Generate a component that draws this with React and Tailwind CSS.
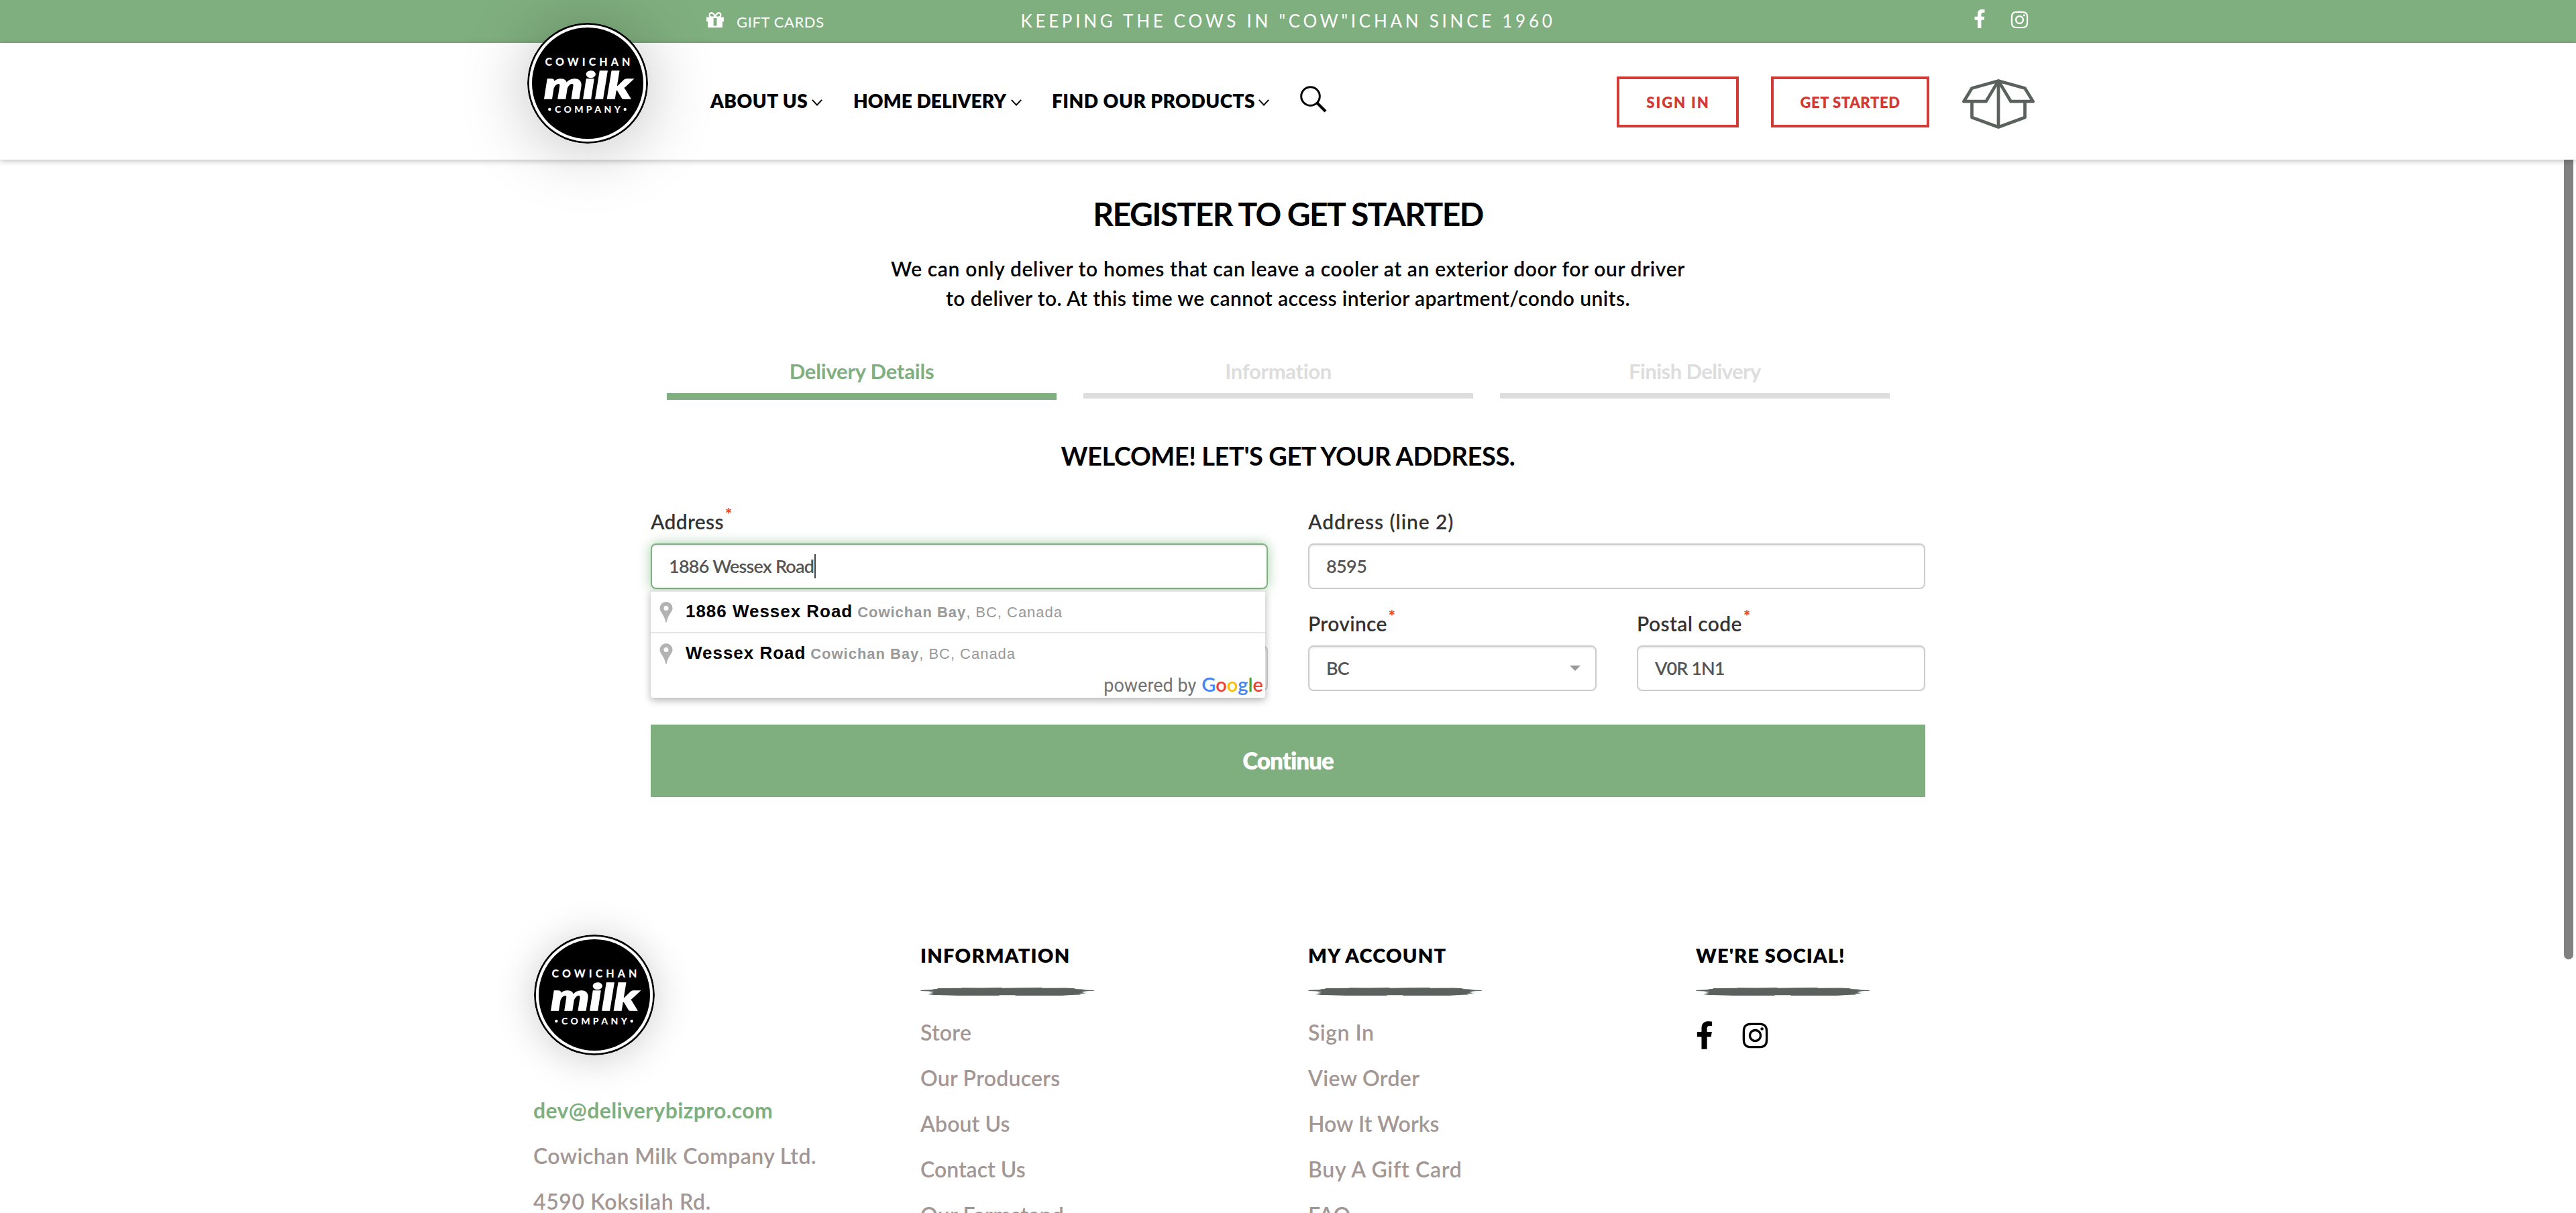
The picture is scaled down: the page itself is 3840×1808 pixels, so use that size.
import { FaFacebookF, FaInstagram } from "react-icons/fa";

function Logo({ className }) {
  return (
    <svg viewBox="0 0 180 180" className={`size-[180px] rounded-full ${className}`}>
      <circle cx="90" cy="90" r="90" fill="#000" />
      <circle cx="90" cy="90" r="87.2" fill="#fff" />
      <circle cx="90" cy="90" r="83" fill="#000" />
      <g fill="#fff" fontFamily="Lato, sans-serif">
        <text x="26.5" y="63.500" fontSize="16" fontWeight="900" textLength="127" lengthAdjust="spacing">COWICHAN</text>
        <text x="25" y="113" fontSize="56" fontWeight="900" fontStyle="italic" stroke="#fff" strokeWidth="1.6" textLength="131" lengthAdjust="spacingAndGlyphs">milk</text>
        <text x="41" y="134" fontSize="14" fontWeight="900" textLength="98" lengthAdjust="spacing">COMPANY</text>
      </g>
      <circle cx="33.3" cy="129" r="2.2" fill="#fff" />
      <circle cx="145.7" cy="129" r="2.2" fill="#fff" />
    </svg>
  );
}

function GiftIcon() {
  return (
    <svg viewBox="0 0 26 23" className="h-[23px] w-[26px]" fill="none">
      <path d="M13 7.6C11.8 3 9.4 1.2 7.3 1.2a2.9 2.9 0 0 0-2.6 3c0 2 1.7 3.4 4 3.4ZM13 7.6C14.2 3 16.6 1.2 18.7 1.2a2.9 2.9 0 0 1 2.6 3c0 2-1.7 3.4-4 3.4Z" stroke="#fff" strokeWidth="2.2" />
      <path fillRule="evenodd" d="M1 7.4h24a1 1 0 0 1 1 1V14h-2v7.5a1.5 1.5 0 0 1-1.5 1.5h-19A1.5 1.5 0 0 1 2 21.500V14H0V8.400a1 1 0 0 1 1-1ZM10.600 8.600v11.800h4.900V8.600Z" fill="#fff" />
    </svg>
  );
}

function Chevron() {
  return (
    <svg viewBox="0 0 16 10" className="h-[10px] w-4" fill="none" stroke="#000" strokeWidth="1.900">
      <path d="M.8.9 8 8.500 15.200.9" />
    </svg>
  );
}

function SearchIcon() {
  return (
    <svg viewBox="0 0 40 40" className="size-10" fill="none" stroke="#000">
      <circle cx="15.500" cy="15.500" r="13.800" strokeWidth="3" />
      <path d="M25.500 25.500 38 38" strokeWidth="4.200" />
    </svg>
  );
}

function BoxIcon() {
  return (
    <svg viewBox="0 0 108 74" className="h-[74px] w-[108px]" fill="none" stroke="#5b625e" strokeWidth="4.700" strokeLinejoin="round">
      <path d="M54 2.400 14.500 13.500 2.400 33.200H35.500ZM54 2.400 93.500 13.500 105.600 33.200H72.500ZM14.500 33.500V57L54 71.500 93.500 57V33.500M54 2.400V71.500" />
    </svg>
  );
}

function Brush() {
  return (
    <svg viewBox="0 0 260 12" className="mt-[29px] h-3 w-[261px]" fill="#5b625d">
      <path d="M0 4 8 3.500 20 3 17 2.200 26 2 24 1 60 .8 62 .3 90 .6 120 0 122 .7 150 .3 180 0 182 .8 215 .5 232 1.200 228 2 240 2.500 246 3.400 259 4.200 258 4.900 240 5.200 250 6.500 240 7 246 8.500 236 9.400 239 10.600 224 10.900 210 12 142 12 140 11.300 118 11.300 116 12 56 12 40 11.600 24 11 10 11 20 9.800 12 8.800 19 8 12 6.500 20 5.800 0 4.900Z" />
    </svg>
  );
}

function PinIcon() {
  return (
    <svg viewBox="0 0 20 31" className="h-[31px] w-5" fill="#b3b3b3">
      <path fillRule="evenodd" d="M10 0a9.500 9.500 0 0 0-9.500 9.500c0 5.500 5.500 8.500 8 17.500.5 1.800.8 4 1.500 4s1-2.200 1.500-4c2.500-9 8-12 8-17.500A9.500 9.500 0 0 0 10 0Zm0 6a3.500 3.500 0 1 1 0 7 3.500 3.500 0 0 1 0-7Z" />
    </svg>
  );
}

function Label({ children, required }) {
  return (
    <div className="flex h-10 text-[30px] leading-[40px] font-semibold text-[#333]">
      {children}
      {required && <span className="ml-[2px] h-5 -mt-[4px] text-[24px] leading-[28px] font-black text-[#f04e23] tracking-normal">*</span>}
    </div>
  );
}

function Field({ children, className = "" }) {
  return (
    <div className={`mt-[13px] flex h-[68px] items-center rounded-lg border-2 pl-[25px] text-[27px] font-semibold text-[#555] ${className}`}>
      {children}
    </div>
  );
}

const plainField = "border-[#ccc] shadow-[inset_0_2px_2px_rgba(0,0,0,0.075)]";

function Suggestion({ main, className = "" }) {
  return (
    <div className={`flex h-[60px] items-center pl-[13px] leading-[58px] ${className}`}>
      <PinIcon />
      <div className="ml-[19px] flex h-[60px] items-baseline font-['Liberation_Sans',sans-serif] whitespace-pre">
        <span className="text-[26px] font-bold tracking-[0.97px] text-black">{main}</span>
        <span className="ml-[7px] text-[22px] tracking-[0.97px] text-[#999]"><b>Cowichan Bay</b>, BC, Canada</span>
      </div>
    </div>
  );
}

function Heading({ children, className }) {
  return <h3 className={`h-10 text-[29px] leading-[41px] font-extrabold text-black ${className}`}>{children}</h3>;
}

export default function App() {
  return (
    <div className="relative flex h-[1808px] flex-col overflow-hidden bg-white font-[Lato,sans-serif] whitespace-nowrap">
      <div className="h-16 shrink-0 bg-[#80af7f] text-white">
        <div className="mx-auto grid h-full w-[2250px] grid-cols-[1fr_auto_1fr] items-center">
          <div className="flex items-center pl-[258px]">
            <div className="mb-[6px]"><GiftIcon /></div>
            <span className="ml-[19px] text-[22px] tracking-[0.6px]">GIFT CARDS</span>
          </div>
          <div className="pb-[2px] text-[26px] tracking-[4.72px]">KEEPING THE COWS IN "COW"ICHAN SINCE 1960</div>
          <div className="flex items-center justify-end pr-[20px] pb-[6px]">
            <FaFacebookF className="mr-[36px] mb-[2px] h-7 w-[18px]" />
            <FaInstagram className="size-[29px]" />
          </div>
        </div>
      </div>

      <header className="relative z-10 h-[174px] shrink-0 shadow-[0_2px_8px_rgba(0,0,0,0.250)]">
        <div className="relative mx-auto flex h-full w-[2250px] items-center">
          <Logo className="absolute -top-[30px] -left-[9px] shadow-[0_6px_100px_rgba(0,0,0,0.250)]" />
          <nav className="ml-[264px] flex items-center pb-[2px] text-[28px] font-extrabold text-black">
            <div className="flex w-[213px] items-center"><span className="tracking-[0.45px]">ABOUT US</span><span className="ml-[6px] mt-[5px]"><Chevron /></span></div>
            <div className="flex w-[296px] items-center"><span className="tracking-[0.1px]">HOME DELIVERY</span><span className="ml-[7px] mt-[5px]"><Chevron /></span></div>
            <div className="flex w-[370px] items-center"><span className="tracking-[0.5px]">FIND OUR PRODUCTS</span><span className="ml-[5px] mt-[5px]"><Chevron /></span></div>
            <div className="-mt-[4px]"><SearchIcon /></div>
          </nav>
          <div className="ml-auto mr-[12px] flex items-center text-[22px] font-extrabold text-[#d23a36]">
            <div className="mt-[2px] flex h-[76px] w-[182px] items-center justify-center border-4 border-[#d23a36] pl-[1px] tracking-[1.9px]">SIGN IN</div>
            <div className="mt-[2px] ml-12 flex h-[76px] w-[236px] items-center justify-center border-4 border-[#d23a36] tracking-[0.55px]">GET STARTED</div>
            <div className="ml-[49px] mt-[8px]"><BoxIcon /></div>
          </div>
        </div>
      </header>

      <main className="mx-auto flex w-[1900px] shrink-0 flex-col pt-[50px] text-black">
        <h1 className="h-[60px] text-center text-[48px] leading-[61px] font-bold tracking-[-1.6px]">REGISTER TO GET STARTED</h1>
        <p className="mt-[30px] text-center text-[30px] leading-[44px] font-semibold">
          <span className="tracking-[0.63px]">We can only deliver to homes that can leave a cooler at an exterior door for our driver</span><br />
          <span className="tracking-[0.42px]">to deliver to. At this time we cannot access interior apartment/condo units.</span>
        </p>

        <div className="mt-[67px] ml-[24px] grid h-[63px] w-[1823px] grid-cols-3 gap-[40px] text-center text-[31px] leading-[40px] font-bold">
          <div className="text-[#80af7f]"><div className="tracking-[-0.2px]">Delivery Details</div><div className="mt-[13px] h-[10px] bg-[#80af7f]" /></div>
          <div className="text-[#ddd]"><div className="tracking-[-0.35px]">Information</div><div className="mt-[13px] h-2 bg-[#ddd]" /></div>
          <div className="text-[#ddd]"><div className="tracking-[-0.56px]">Finish Delivery</div><div className="mt-[13px] h-2 bg-[#ddd]" /></div>
        </div>

        <h2 className="mt-[59px] h-12 text-center text-[38px] leading-[49px] font-bold tracking-[-0.42px]">WELCOME! LET'S GET YOUR ADDRESS.</h2>

        <form className="mt-[54px] grid grid-cols-2 gap-x-[60px] gap-y-[31px]">
          <div>
            <Label required><span className="tracking-[0.3px]">Address</span></Label>
            <div className="relative">
              <Field className="border-[#80af7f] shadow-[inset_0_2px_2px_rgba(0,0,0,0.075),0_0_18px_rgba(102,175,107,0.6)]">
                <span className="tracking-[-0.78px]">1886 Wessex Road</span>
                <span className="ml-px h-9 w-[2px] bg-[#444]" />
              </Field>
              <div className="absolute top-[70px] left-0 z-20 h-[160px] w-[916px] rounded-b-[4px] border-t-2 border-[#e6e6e6] bg-white shadow-[0_4px_12px_rgba(0,0,0,0.300)]">
                <Suggestion main="1886 Wessex Road" />
                <Suggestion main="Wessex Road" className="h-[62px] border-t-2 border-[#e6e6e6]" />
                <div className="flex h-[34px] items-baseline justify-end pr-[3px] leading-[32px]">
                  <span className="mr-[8px] font-[Roboto,sans-serif] text-[27px] text-[#737373]">powered by</span>
                  <span className="text-[29px] font-semibold">
                    <span className="text-[#4285f4]">G</span><span className="text-[#ea4335]">o</span><span className="text-[#fbbc05]">o</span><span className="text-[#4285f4]">g</span><span className="text-[#34a853]">l</span><span className="text-[#ea4335]">e</span>
                  </span>
                </div>
              </div>
            </div>
          </div>
          <div>
            <Label><span className="tracking-[0.9px]">Address (line 2)</span></Label>
            <Field className={plainField}><span className="tracking-[-0.6px]">8595</span></Field>
          </div>
          <div className="pt-10"><Field className={plainField} /></div>
          <div className="grid grid-cols-2 gap-[60px]">
            <div>
              <Label required><span className="tracking-[0.3px]">Province</span></Label>
              <Field className={`justify-between pr-[22px] ${plainField}`}>
                <span className="tracking-[-1px]">BC</span>
                <svg viewBox="0 0 16 8" className="h-2 w-4" fill="#999"><path d="M0 0h16L8 8Z" /></svg>
              </Field>
            </div>
            <div>
              <Label required><span className="tracking-[0.38px]">Postal code</span></Label>
              <Field className={plainField}><span className="tracking-[-0.95px]">V0R 1N1</span></Field>
            </div>
          </div>
        </form>

        <button className="mt-[50px] h-[108px] bg-[#80af7f] pb-[2px] text-[35px] font-extrabold tracking-[-1.1px] text-white">Continue</button>
      </main>

      <footer className="mx-auto mt-[215px] grid w-[2250px] shrink-0 grid-cols-[577px_578px_578px_1fr] text-[32px] leading-[68px] font-semibold text-[#a39795]">
        <div className="-mt-[10px]">
          <Logo className="mb-[48px] ml-px shadow-[0_4px_60px_rgba(0,0,0,0.200)]" />
          <div className="font-bold tracking-[0.36px] text-[#80af7f]">dev@deliverybizpro.com</div>
          <div className="tracking-[0.4px]">Cowichan Milk Company Ltd.</div>
          <div className="tracking-[0.62px]">4590 Koksilah Rd.</div>
        </div>
        <div>
          <Heading className="tracking-[1.25px]">INFORMATION</Heading>
          <Brush />
          <ul className="mt-[21px] tracking-[0.26px]">
            <li>Store</li>
            <li>Our Producers</li>
            <li className="tracking-[0.1px]">About Us</li>
            <li className="tracking-[0px]">Contact Us</li>
            <li>Our Farmstand</li>
          </ul>
        </div>
        <div>
          <Heading className="tracking-[1.2px]">MY ACCOUNT</Heading>
          <Brush />
          <ul className="mt-[21px]">
            <li className="tracking-[0.5px]">Sign In</li>
            <li className="tracking-[0.33px]">View Order</li>
            <li className="tracking-[0.02px]">How It Works</li>
            <li className="tracking-[0.7px]">Buy A Gift Card</li>
            <li>FAQ</li>
          </ul>
        </div>
        <div>
          <Heading className="tracking-[1.1px]">WE'RE SOCIAL!</Heading>
          <Brush />
          <div className="mt-[37px] flex items-center text-black">
            <FaFacebookF className="h-[42px] w-[26px]" />
            <FaInstagram className="ml-[41px] mt-px size-[43px]" />
          </div>
        </div>
      </footer>

      <div className="absolute top-[238px] right-1 h-[1192px] w-[14px] rounded-b-full bg-[#808080]" />
    </div>
  );
}
